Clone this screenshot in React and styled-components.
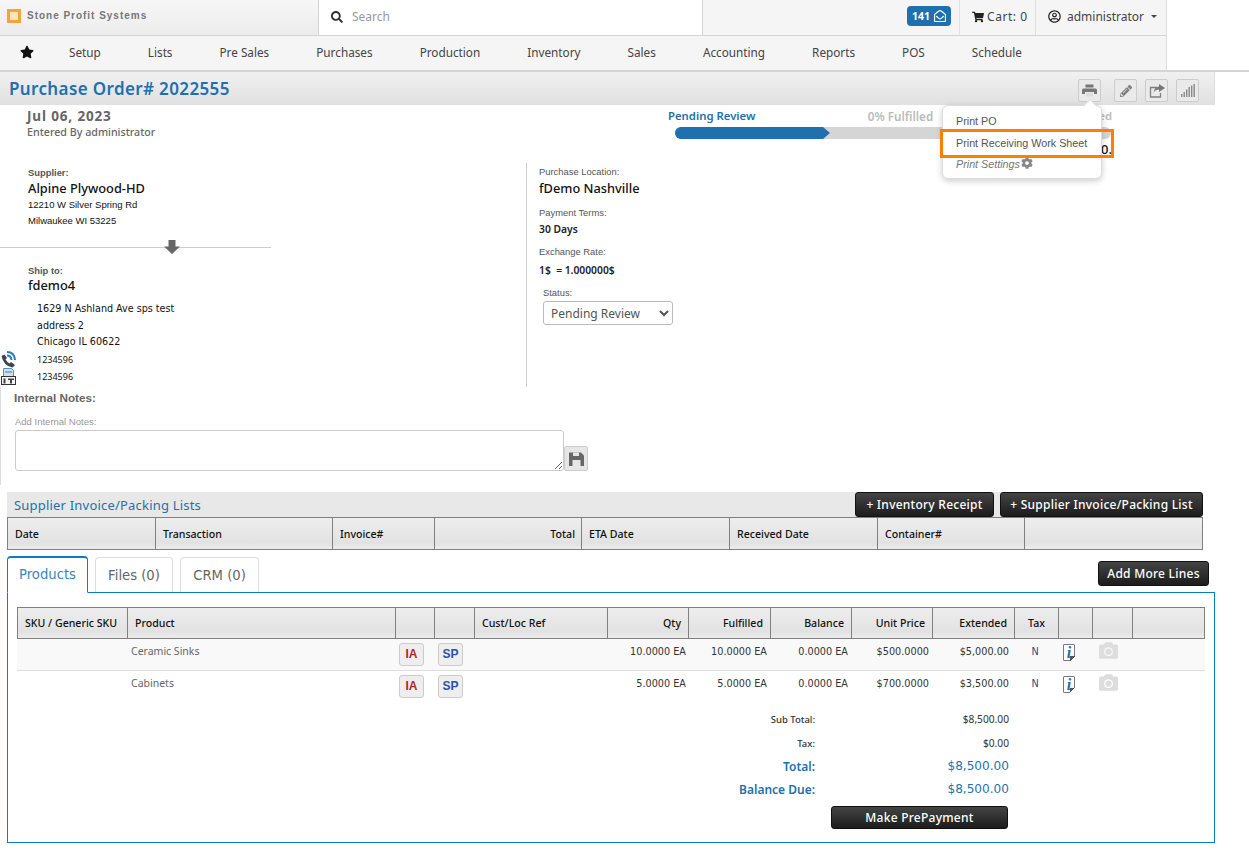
import React from "react";
import styled, { createGlobalStyle } from "styled-components";
import {
  FaStar,
  FaSearch,
  FaPencilAlt,
  FaCog,
  FaShoppingCart,
  FaRegUserCircle,
  FaRegEnvelopeOpen,
  FaCamera,
} from "react-icons/fa";

const GlobalStyle = createGlobalStyle`
  body {
    margin: 0;
    background: #fff;
    color: #333;
    font-family: "Noto Sans", "DejaVu Sans", sans-serif;
  }
  * { box-sizing: border-box; }
`;

const Page = styled.div`
  width: 1249px;
  height: 864px;
  overflow: hidden;
`;

const HeaderWrap = styled.div`
  border-bottom: 2px solid #d4d4d4;
  height: 72px;
`;

const Header = styled.div`
  width: 1167px;
  height: 70px;
  border-right: 1px solid #ddd;
  background: #f5f5f5;
`;

const TopRow = styled.div`
  display: flex;
  height: 36px;
  border-bottom: 1px solid #d4d4d4;
`;

const Brand = styled.div`
  width: 318px;
  display: flex;
  align-items: center;
  gap: 6px;
  padding: 0 0 4px 7px;
  background: linear-gradient(#f7f7f7, #ececec);
  font: bold 10px "Liberation Sans", Arial, sans-serif;
  letter-spacing: 0.98px;
  color: #777;
`;

const BrandMark = styled.span`
  width: 14px;
  height: 14px;
  border: 3px solid #f5a33c;
  background: #fbe3c2;
`;

const Search = styled.div`
  width: 385px;
  display: flex;
  align-items: center;
  gap: 9px;
  padding: 0 0 2px 12px;
  background: #fff;
  border-left: 1px solid #d4d4d4;
  border-right: 1px solid #d4d4d4;
  font-size: 12px;
  color: #999;
  svg { color: #333; font-size: 12px; }
`;

const TopRight = styled.div`
  flex: 1;
  display: flex;
  justify-content: flex-end;
  font-size: 12px;
  color: #444;
`;

const BadgeCell = styled.div`
  display: flex;
  align-items: center;
  padding: 0 8px 3px 0;
  border-right: 1px solid #e2e2e2;
`;

const Badge = styled.span`
  width: 44px;
  height: 20px;
  border-radius: 4px;
  background: #1f70ad;
  color: #fff;
  display: flex;
  align-items: center;
  justify-content: center;
  gap: 4px;
  font-size: 10.5px;
  font-weight: 700;
  svg { font-size: 12px; }
`;

const CartCell = styled.div`
  width: 76px;
  display: flex;
  align-items: center;
  padding: 0 0 2px 12px;
  gap: 3px;
  letter-spacing: 0.55px;
  border-right: 1px solid #ddd;
  white-space: nowrap;
  svg { color: #222; font-size: 12px; }
`;

const UserCell = styled.div`
  width: 130px;
  display: flex;
  align-items: center;
  padding: 0 0 2px 12px;
  gap: 6px;
  white-space: nowrap;
  svg { color: #222; font-size: 13px; }
`;

const Caret = styled.span`
  width: 0;
  height: 0;
  margin-left: 1px;
  border-left: 3px solid transparent;
  border-right: 3px solid transparent;
  border-top: 3px solid #444;
`;

const NavRow = styled.nav`
  display: flex;
  align-items: center;
  height: 34px;
  padding: 0 0 2px 20px;
  gap: 47px;
  font-size: 11.75px;
  color: #444;
  svg:first-child { color: #111; font-size: 14px; margin-right: -12px; }
`;

const TitleBar = styled.div`
  width: 1215px;
  height: 33px;
  display: flex;
  align-items: center;
  justify-content: space-between;
  padding: 0 15px 0 9px;
  background: linear-gradient(#f1f1f1, #e0e0e0);
  border-right: 1px solid #ddd;
`;

const Title = styled.h1`
  margin: 0;
  font-size: 17px;
  font-weight: 600;
  letter-spacing: 0.37px;
  color: #1f70ad;
`;

const Tools = styled.div`
  display: flex;
  align-items: center;
  gap: 8px;
  margin-top: 4px;
`;

const ToolAnchor = styled.div`
  position: relative;
  margin-right: 5px;
`;

const ToolButton = styled.button`
  width: 23px;
  height: 23px;
  padding: 0;
  display: flex;
  align-items: center;
  justify-content: center;
  border: 1px solid #ccc;
  border-radius: 2px;
  background: #eaeaea;
  color: #808080;
  font-size: 12px;
`;

const Popover = styled.div`
  position: absolute;
  top: 26px;
  right: -1px;
  width: 160px;
  height: 74px;
  background: #fff;
  border: 1px solid #ddd;
  border-radius: 6px;
  box-shadow: 0 2px 6px rgba(0, 0, 0, 0.2);
  padding: 5px 13px;
  z-index: 5;
  font: 10.75px/21.5px "Liberation Sans", Arial, sans-serif;
  color: #555;
  &::before {
    content: "";
    position: absolute;
    top: -5px;
    right: 6px;
    width: 9px;
    height: 9px;
    background: #fff;
    border-left: 1px solid #ddd;
    border-top: 1px solid #ddd;
    transform: rotate(45deg);
  }
`;

const PopItem = styled.div`
  white-space: nowrap;
  font-style: ${(p) => (p.$muted ? "italic" : "normal")};
  color: ${(p) => (p.$muted ? "#777" : "#555")};
  svg { margin-left: 1px; vertical-align: -1px; color: #888; font-size: 12px; }
`;

const Highlight = styled.div`
  position: absolute;
  left: -3px;
  top: 23px;
  width: 174px;
  height: 29px;
  border: 3px solid #ff8000;
`;

const Summary = styled.div`
  display: flex;
  height: 58px;
`;

const Dated = styled.div`
  width: 668px;
  padding: 2px 0 0 27px;
`;

const DateText = styled.div`
  font-size: 13.5px;
  font-weight: 700;
  letter-spacing: 0.85px;
  color: #666;
`;

const EnteredBy = styled.div`
  font-size: 10.7px;
  font-weight: 500;
  color: #666;
`;

const Progress = styled.div`
  width: 444px;
  padding-top: 3px;
`;

const ProgressLabels = styled.div`
  display: flex;
  font-size: 11.35px;
  font-weight: 600;
  height: 15px;
  color: #1f70ad;
  span:nth-child(2) { margin-left: auto; margin-right: 165px; font-size: 11.7px; color: #bbb; }
  span:nth-child(3) { color: #bbb; }
`;

const Track = styled.div`
  margin: 4px 0 0 7px;
  width: 436px;
  height: 12px;
  background: #d5d5d5;
  border-radius: 6px;
`;

const Fill = styled.div`
  width: 155px;
  height: 12px;
  background: #1f70ad;
  border-radius: 6px 0 0 6px;
  clip-path: polygon(0 0, 148px 0, 155px 50%, 148px 100%, 0 100%);
`;

const ProgressNote = styled.div`
  text-align: right;
  font-size: 13px;
  font-weight: 500;
  color: #111;
  line-height: 14px;
  margin-top: 3px;
`;

const Parties = styled.div`
  display: flex;
  height: 224px;
`;

const LeftCol = styled.div`
  width: 527px;
  border-right: 1px solid #ccc;
`;

const RightCol = styled.div`
  padding: 3px 0 0 12px;
`;

const SmallLabel = styled.div`
  font: ${(p) => (p.$bold ? "bold" : "normal")} 9.4px/12px "Liberation Sans", Arial, sans-serif;
  color: #555;
`;

const BigName = styled.div`
  font-size: 12.8px;
  font-weight: 500;
  line-height: 18px;
  margin-top: ${(p) => p.$top || 0}px;
  color: #111;
`;

const Party = styled.div`
  padding: ${(p) => p.$top}px 0 0 28px;
`;

const AddressLine = styled.div`
  font: 9.5px/16px "Liberation Sans", Arial, sans-serif;
  color: #111;
`;

const Divider = styled.div`
  position: relative;
  width: 271px;
  height: 1px;
  margin: 18px 0 15px;
  background: #ccc;
  svg {
    position: absolute;
    left: 164px;
    top: -7px;
  }
`;

const ShipLines = styled.div`
  margin: 7px 0 0 9px;
`;

const ShipLine = styled.div`
  font-family: "DejaVu Sans", sans-serif;
  font-size: 9.6px;
  line-height: 16.6px;
  color: #111;
`;

const ContactRow = styled.div`
  display: flex;
  align-items: center;
  gap: 21px;
  margin-left: 1px;
  height: 17px;
  font-size: 9px;
  color: #111;
`;

const ContactIcon = styled.svg`
  width: 15px;
  height: 17px;
  flex: none;
`;

const InfoBlock = styled.div`
  margin-bottom: ${(p) => p.$gap}px;
`;

const InfoValue = styled.div`
  font-size: 10.3px;
  font-weight: 600;
  line-height: 18px;
  margin-top: ${(p) => p.$top}px;
  color: #222;
`;

const StatusBlock = styled.div`
  margin: 8px 0 0 4px;
`;

const StatusSelect = styled.select`
  display: block;
  width: 130px;
  height: 24px;
  margin-top: 2px;
  padding: 0 3px;
  background: #fff;
  border: 1px solid #bbb;
  border-radius: 3px;
  font: 12px "Noto Sans", sans-serif;
  color: #555;
`;

const Notes = styled.div`
  height: 98px;
  width: 620px;
  padding: 4px 0 0 14px;
  border-left: 1px solid #ddd;
`;

const NotesTitle = styled.div`
  margin-left: -1px;
  font: bold 11.7px/14px "Liberation Sans", Arial, sans-serif;
  color: #666;
`;

const NotesLabel = styled.div`
  margin-top: 11px;
  font: 9.5px/12px "Liberation Sans", Arial, sans-serif;
  color: #999;
`;

const NotesRow = styled.div`
  display: flex;
  align-items: flex-end;
  margin-top: 2px;
`;

const NotesInput = styled.textarea`
  width: 549px;
  height: 41px;
  border: 1px solid #ccc;
  border-radius: 3px;
  background: #fff;
`;

const SaveButton = styled.button`
  width: 24px;
  height: 25px;
  padding: 0;
  border: 1px solid #ccc;
  border-radius: 2px;
  background: #e6e6e6;
  display: flex;
  align-items: center;
  justify-content: center;
`;

const InvoiceSection = styled.section`
  margin: 7px 0 0 7px;
  width: 1196px;
`;

const InvoiceBar = styled.div`
  height: 25px;
  display: flex;
  align-items: center;
  gap: 6px;
  padding-left: 7px;
  background: #e8e8e8;
`;

const InvoiceTitle = styled.div`
  flex: 1;
  font-size: 13px;
  letter-spacing: 0.2px;
  color: #1f70ad;
`;

const DarkButton = styled.button`
  height: ${(p) => p.$h || 25}px;
  width: ${(p) => p.$w}px;
  padding: 0;
  border: 1px solid #111;
  border-radius: 3px;
  background: linear-gradient(#444, #1c1c1c);
  color: #fff;
  font: 500 12px "Noto Sans", sans-serif;
  letter-spacing: 0.25px;
  white-space: nowrap;
`;

const HeadRow = styled.div`
  display: grid;
  grid-template-columns: ${(p) => p.$cols};
  width: ${(p) => p.$w || 1196}px;
  height: ${(p) => p.$h}px;
  border: 1px solid #808080;
  background: linear-gradient(#eee 0%, #e2e2e2 80%, #ececec 100%);
`;

const alignments = { right: "flex-end", center: "center", left: "flex-start" };

const HeadCell = styled.div`
  display: flex;
  align-items: center;
  justify-content: ${(p) => alignments[p.$align || "left"]};
  padding: 0 ${(p) => (p.$align === "center" ? 7 : p.$rp)}px 0 7px;
  font-size: 10.6px;
  font-weight: 500;
  color: #111;
  white-space: nowrap;
  border-left: 1px solid #808080;
  &:first-child { border-left: 0; }
`;

const TabsRow = styled.div`
  display: flex;
  align-items: flex-end;
  gap: 7px;
  height: 42px;
  margin: 0 0 0 7px;
  width: 1202px;
`;

const Tab = styled.div`
  height: ${(p) => (p.$active ? 37 : 35)}px;
  width: ${(p) => p.$w}px;
  padding-bottom: ${(p) => (p.$active ? 2 : 0)}px;
  display: flex;
  align-items: center;
  justify-content: center;
  border: 1px solid ${(p) => (p.$active ? "#0a7cc4" : "#ddd")};
  border-top-width: ${(p) => (p.$active ? 2 : 1)}px;
  border-bottom: ${(p) => (p.$active ? "1px solid #fff" : "0")};
  border-radius: 4px 4px 0 0;
  background: #fff;
  margin-bottom: ${(p) => (p.$active ? -1 : 0)}px;
  z-index: 1;
  font-family: "DejaVu Sans", sans-serif;
  font-size: 13.2px;
  color: ${(p) => (p.$active ? "#3a86c0" : "#666")};
`;

const TabSpacer = styled.div`
  flex: 1;
  align-self: flex-start;
  display: flex;
  justify-content: flex-end;
  padding-top: 11px;
`;

const Panel = styled.div`
  width: 1208px;
  height: 251px;
  margin-left: 7px;
  padding: 14px 0 0 9px;
  border: 1px solid #0a7cc4;
`;

const ProductRow = styled.div`
  display: grid;
  grid-template-columns: ${(p) => p.$cols};
  width: 1188px;
  height: 32px;
  border-bottom: ${(p) => (p.$last ? "0" : "1px solid #ddd")};
  background: ${(p) => (p.$last ? "#fff" : "#f9f9f9")};
`;

const Cell = styled.div`
  padding: 6px ${(p) => p.$rp || 0}px 0 0;
  text-align: ${(p) => p.$align || "left"};
  font-family: "DejaVu Sans", sans-serif;
  font-size: 9.7px;
  line-height: 14px;
  color: ${(p) => p.$color || "#333"};
  white-space: nowrap;
`;

const ProductName = styled.div`
  font-size: 10.5px;
  line-height: 14px;
  color: #666;
  padding: 5px 0 0 5px;
`;

const IconCell = styled.div``;

const TagButton = styled.span`
  display: block;
  margin: 4px 0 0 ${(p) => p.$left}px;
  width: 25px;
  height: 23px;
  border: 1px solid #ccc;
  border-radius: 3px;
  background: #eee;
  text-align: center;
  font: bold 12px/21px "Liberation Sans", Arial, sans-serif;
  color: ${(p) => p.$color};
`;

const InfoIcon = styled.span`
  position: relative;
  display: block;
  width: 12px;
  height: 17px;
  margin: 5px 0 0 6px;
  border: 1px solid #778;
  border-radius: 1px;
  background: linear-gradient(135deg, #fff 60%, #e4e8ee);
  text-align: center;
  font: italic bold 16px/15px "Liberation Serif", serif;
  color: #1f70ad;
  &::after {
    content: "";
    position: absolute;
    right: -1px;
    bottom: -1px;
    width: 5px;
    height: 5px;
    background: linear-gradient(135deg, #555 50%, #fff 50%);
  }
`;

const CameraIcon = styled(FaCamera)`
  display: block;
  margin: 2px 0 0 8px;
  font-size: 19px;
  color: #ddd;
`;

const Totals = styled.div`
  display: grid;
  grid-template-columns: 798px 194px;
  width: 992px;
  margin-top: 5px;
`;

const TotalLabel = styled.div`
  text-align: right;
  height: ${(p) => (p.$big ? 23 : 24)}px;
  line-height: ${(p) => (p.$big ? 21 : 23)}px;
  font-size: ${(p) => (p.$big ? 12 : 9.5)}px;
  font-weight: ${(p) => (p.$big ? 600 : 500)};
  color: ${(p) => (p.$big ? "#1f70ad" : "#333")};
`;

const TotalValue = styled.div`
  text-align: right;
  height: ${(p) => (p.$big ? 23 : 24)}px;
  line-height: ${(p) => (p.$big ? 21 : 23)}px;
  font-family: ${(p) => (p.$big ? '"DejaVu Sans", sans-serif' : '"Noto Sans", sans-serif')};
  font-size: ${(p) => (p.$big ? 12.1 : 10.2)}px;
  color: ${(p) => (p.$big ? "#1f70ad" : "#333")};
`;

const PayRow = styled.div`
  display: flex;
  justify-content: flex-end;
  width: 991px;
  margin-top: 4px;
`;

const invoiceCols = "147px 177px 102px 147px 148px 148px 147px 1fr";
const productCols = "109px 268px 39px 40px 133px 81px 82px 81px 81px 82px 44px 34px 40px 1fr";

const invoiceHeads = [
  { label: "Date" },
  { label: "Transaction" },
  { label: "Invoice#" },
  { label: "Total", align: "right", rp: 6 },
  { label: "ETA Date" },
  { label: "Received Date" },
  { label: "Container#" },
  { label: "" },
];

const productHeads = [
  { label: "SKU / Generic SKU" },
  { label: "Product" },
  { label: "" },
  { label: "" },
  { label: "Cust/Loc Ref" },
  { label: "Qty", align: "right", rp: 7 },
  { label: "Fulfilled", align: "right", rp: 7 },
  { label: "Balance", align: "right", rp: 7 },
  { label: "Unit Price", align: "right", rp: 7 },
  { label: "Extended", align: "right", rp: 7 },
  { label: "Tax", align: "center" },
  { label: "" },
  { label: "" },
  { label: "" },
];

const products = [
  { name: "Ceramic Sinks", qty: "10.0000 EA", fulfilled: "10.0000 EA", price: "$500.0000", ext: "$5,000.00" },
  { name: "Cabinets", qty: "5.0000 EA", fulfilled: "5.0000 EA", price: "$700.0000", ext: "$3,500.00", last: true },
];

const navItems = ["Setup", "Lists", "Pre Sales", "Purchases", "Production", "Inventory", "Sales", "Accounting", "Reports", "POS", "Schedule"];

function PrintIcon() {
  return (
    <svg width="15" height="13" viewBox="0 0 15 13" fill="#777">
      <path d="M3.5 0.5h8v3h-8z" />
      <path d="M1.5 4.5h12a1.5 1.5 0 0 1 1.5 1.5v4h-3v-2h-9v2h-3v-4a1.5 1.5 0 0 1 1.5-1.5z" />
      <path d="M4 9h7v3.5h-7z" fill="#ddd" />
    </svg>
  );
}

function ShareIcon() {
  return (
    <svg width="16" height="14" viewBox="0 0 16 14">
      <path d="M8 3.5H1.5v9.5h10V9" fill="none" stroke="#808080" strokeWidth="1.3" />
      <path d="M10 0l6 4-6 4V5.6c-2.6 0-4.2 1-5.4 3.4 0.2-3.6 2-6 5.4-6.4z" fill="#777" />
    </svg>
  );
}

function SignalIcon() {
  return (
    <svg width="14" height="13" viewBox="0 0 14 13" fill="#8a8a8a">
      <rect x="0" y="10" width="1.4" height="3" />
      <rect x="2.5" y="8" width="1.4" height="5" />
      <rect x="5" y="5.5" width="1.4" height="7.5" />
      <rect x="7.5" y="3" width="1.4" height="10" />
      <rect x="10" y="1.5" width="1.4" height="11.5" />
      <rect x="12.5" y="0" width="1.4" height="13" />
    </svg>
  );
}

function FloppyIcon() {
  return (
    <svg width="15" height="14" viewBox="0 0 15 14">
      <path d="M0 0.5h12l3 3v10.5h-15z" fill="#666" />
      <path d="M4 0.5h6v3.5h-6z" fill="#e6e6e6" />
      <path d="M3.5 8h8v6h-8z" fill="#e6e6e6" />
    </svg>
  );
}

function DownArrow() {
  return (
    <svg width="16" height="14" viewBox="0 0 16 14" fill="#666">
      <path d="M4.5 0h7v6.5h4.5l-8 7.5-8-7.5h4.5z" />
    </svg>
  );
}

export default function App() {
  return (
    <Page>
      <GlobalStyle />
      <HeaderWrap>
        <Header>
          <TopRow>
            <Brand>
              <BrandMark />
              Stone Profit Systems
            </Brand>
            <Search>
              <FaSearch />
              Search
            </Search>
            <TopRight>
              <BadgeCell>
                <Badge>
                  141 <FaRegEnvelopeOpen />
                </Badge>
              </BadgeCell>
              <CartCell>
                <FaShoppingCart />
                Cart: 0
              </CartCell>
              <UserCell>
                <FaRegUserCircle />
                administrator
                <Caret />
              </UserCell>
            </TopRight>
          </TopRow>
          <NavRow>
            <FaStar />
            {navItems.map((item) => (
              <span key={item}>{item}</span>
            ))}
          </NavRow>
        </Header>
      </HeaderWrap>

      <TitleBar>
        <Title>Purchase Order# 2022555</Title>
        <Tools>
          <ToolAnchor>
            <ToolButton>
              <PrintIcon />
            </ToolButton>
            <Popover>
              <PopItem>Print PO</PopItem>
              <PopItem>Print Receiving Work Sheet</PopItem>
              <PopItem $muted>
                Print Settings
                <FaCog />
              </PopItem>
              <Highlight />
            </Popover>
          </ToolAnchor>
          <ToolButton>
            <FaPencilAlt />
          </ToolButton>
          <ToolButton>
            <ShareIcon />
          </ToolButton>
          <ToolButton>
            <SignalIcon />
          </ToolButton>
        </Tools>
      </TitleBar>

      <Summary>
        <Dated>
          <DateText>Jul 06, 2023</DateText>
          <EnteredBy>Entered By administrator</EnteredBy>
        </Dated>
        <Progress>
          <ProgressLabels>
            <span>Pending Review</span>
            <span>0% Fulfilled</span>
            <span>ed</span>
          </ProgressLabels>
          <Track>
            <Fill />
          </Track>
          <ProgressNote>0.</ProgressNote>
        </Progress>
      </Summary>

      <Parties>
        <LeftCol>
          <Party $top={4}>
            <SmallLabel $bold>Supplier:</SmallLabel>
            <BigName>Alpine Plywood-HD</BigName>
            <AddressLine>12210 W Silver Spring Rd</AddressLine>
            <AddressLine>Milwaukee WI 53225</AddressLine>
          </Party>
          <Divider>
            <DownArrow />
          </Divider>
          <Party $top={2}>
            <SmallLabel $bold>Ship to:</SmallLabel>
            <BigName $top={-1}>fdemo4</BigName>
            <ShipLines>
              <ShipLine>1629 N Ashland Ave sps test</ShipLine>
              <ShipLine>address 2</ShipLine>
              <ShipLine>Chicago IL 60622</ShipLine>
            </ShipLines>
          </Party>
          <ContactRow>
            <ContactIcon viewBox="0 0 15 17">
              <path d="M0.5 5 L3.5 3.5 L6 7 L4.5 8.5 Q6 11 8.5 12.5 L10 11 L14 14 L11.5 16.5 Q2.5 15 0.5 5 Z" fill="#3d4450" />
              <path d="M6 1 Q13.5 1 14 9 M6 4.5 Q10 4.5 10.5 9" fill="none" stroke="#2f7ab8" strokeWidth="2" />
            </ContactIcon>
            1234596
          </ContactRow>
          <ContactRow>
            <ContactIcon viewBox="0 0 15 17">
              <path d="M2.5 0.5h8l2 2v6h-10z" fill="#cfe0f0" stroke="#4f8fc8" />
              <rect x="4" y="3" width="7" height="2" fill="#7fb0da" />
              <rect x="0.5" y="8.5" width="14" height="8" fill="#f4f4f4" stroke="#333" />
              <rect x="2.5" y="10.5" width="2" height="5" fill="#444" />
              <rect x="7" y="10.5" width="6" height="1.5" fill="#444" />
              <rect x="9" y="12" width="2" height="3.5" fill="#444" />
            </ContactIcon>
            1234596
          </ContactRow>
        </LeftCol>
        <RightCol>
          <InfoBlock $gap={10}>
            <SmallLabel>Purchase Location:</SmallLabel>
            <BigName $top={1}>fDemo Nashville</BigName>
          </InfoBlock>
          <InfoBlock $gap={8}>
            <SmallLabel>Payment Terms:</SmallLabel>
            <InfoValue $top={1}>30 Days</InfoValue>
          </InfoBlock>
          <InfoBlock $gap={7}>
            <SmallLabel>Exchange Rate:</SmallLabel>
            <InfoValue $top={3}>1$ &nbsp;= 1.000000$</InfoValue>
          </InfoBlock>
          <StatusBlock>
            <SmallLabel>Status:</SmallLabel>
            <StatusSelect defaultValue="Pending Review">
              <option>Pending Review</option>
            </StatusSelect>
          </StatusBlock>
        </RightCol>
      </Parties>

      <Notes>
        <NotesTitle>Internal Notes:</NotesTitle>
        <NotesLabel>Add Internal Notes:</NotesLabel>
        <NotesRow>
          <NotesInput />
          <SaveButton>
            <FloppyIcon />
          </SaveButton>
        </NotesRow>
      </Notes>

      <InvoiceSection>
        <InvoiceBar>
          <InvoiceTitle>Supplier Invoice/Packing Lists</InvoiceTitle>
          <DarkButton $w={139}>+ Inventory Receipt</DarkButton>
          <DarkButton $w={203}>+ Supplier Invoice/Packing List</DarkButton>
        </InvoiceBar>
        <HeadRow $cols={invoiceCols} $h={33}>
          {invoiceHeads.map((head, i) => (
            <HeadCell key={i} $align={head.align} $rp={head.rp || 5}>
              {head.label}
            </HeadCell>
          ))}
        </HeadRow>
      </InvoiceSection>

      <TabsRow>
        <Tab $active $w={81}>Products</Tab>
        <Tab $w={78}>Files (0)</Tab>
        <Tab $w={79}>CRM (0)</Tab>
        <TabSpacer>
          <DarkButton $w={111}>Add More Lines</DarkButton>
        </TabSpacer>
      </TabsRow>

      <Panel>
        <HeadRow $cols={productCols} $h={32} $w={1188}>
          {productHeads.map((head, i) => (
            <HeadCell key={i} $align={head.align} $rp={head.rp || 5}>
              {head.label}
            </HeadCell>
          ))}
        </HeadRow>
        {products.map((row) => (
          <ProductRow key={row.name} $cols={productCols} $last={row.last}>
            <IconCell />
            <ProductName>{row.name}</ProductName>
            <IconCell>
              <TagButton $color="#b8242a" $left={5}>IA</TagButton>
            </IconCell>
            <IconCell>
              <TagButton $color="#2d4fb0" $left={5}>SP</TagButton>
            </IconCell>
            <IconCell />
            <Cell $align="right" $rp={1}>{row.qty}</Cell>
            <Cell $align="right" $rp={2}>{row.fulfilled}</Cell>
            <Cell $align="right" $rp={2}>0.0000 EA</Cell>
            <Cell $align="right" $rp={2}>{row.price}</Cell>
            <Cell $align="right" $rp={4}>{row.ext}</Cell>
            <Cell $align="center" $color="#2d4a7a">N</Cell>
            <IconCell>
              <InfoIcon>i</InfoIcon>
            </IconCell>
            <IconCell>
              <CameraIcon />
            </IconCell>
            <IconCell />
          </ProductRow>
        ))}
        <Totals>
          <TotalLabel>Sub Total:</TotalLabel>
          <TotalValue>$8,500.00</TotalValue>
          <TotalLabel>Tax:</TotalLabel>
          <TotalValue>$0.00</TotalValue>
          <TotalLabel $big>Total:</TotalLabel>
          <TotalValue $big>$8,500.00</TotalValue>
          <TotalLabel $big>Balance Due:</TotalLabel>
          <TotalValue $big>$8,500.00</TotalValue>
        </Totals>
        <PayRow>
          <DarkButton $w={177} $h={23}>Make PrePayment</DarkButton>
        </PayRow>
      </Panel>
    </Page>
  );
}
